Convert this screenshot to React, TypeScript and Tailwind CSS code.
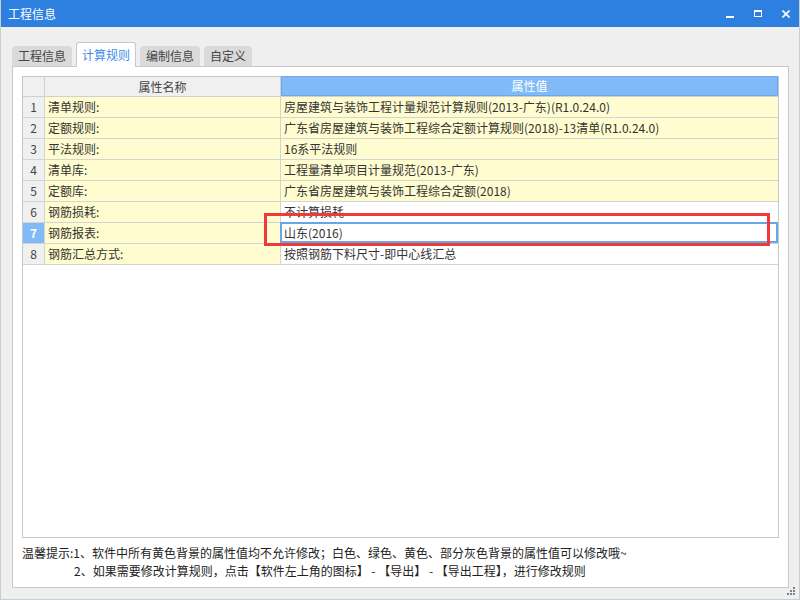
import React from "react";

const rows: { name: string; value: string; locked: boolean }[] = [
  { name: "清单规则:", value: "房屋建筑与装饰工程计量规范计算规则(2013-广东)(R1.0.24.0)", locked: true },
  { name: "定额规则:", value: "广东省房屋建筑与装饰工程综合定额计算规则(2018)-13清单(R1.0.24.0)", locked: true },
  { name: "平法规则:", value: "16系平法规则", locked: true },
  { name: "清单库:", value: "工程量清单项目计量规范(2013-广东)", locked: true },
  { name: "定额库:", value: "广东省房屋建筑与装饰工程综合定额(2018)", locked: true },
  { name: "钢筋损耗:", value: "不计算损耗", locked: false },
  { name: "钢筋报表:", value: "山东(2016)", locked: false },
  { name: "钢筋汇总方式:", value: "按照钢筋下料尺寸-即中心线汇总", locked: false },
];

const tabs = ["工程信息", "计算规则", "编制信息", "自定义"];

export default function App() {
  const selected = 6;

  return (
    <div
      className="relative w-[800px] h-[600px] bg-[#efefef] overflow-hidden border-x border-b border-[#c9ced6] text-[12px] text-[#222]"
      style={{ fontFamily: '"Noto Sans CJK SC", "Noto Sans", sans-serif' }}
    >
      {/* Title bar */}
      <div className="h-[27px] bg-[#2d80e0] flex items-center pl-[8px] text-white text-[12px] -mx-px">
        <span>工程信息</span>
        <div className="ml-auto flex items-center h-full">
          <div className="w-[8px] h-[2px] bg-white mt-[6px] mr-[20px]" />
          <div className="w-[8px] h-[7px] border border-white border-t-2 mr-[20px]" />
          <svg width="8" height="8" viewBox="0 0 8 8" className="mr-[10px]">
            <path d="M0.5 0.5L7.5 7.5M7.5 0.5L0.5 7.5" stroke="white" strokeWidth="1.6" />
          </svg>
        </div>
      </div>

      {/* Tabs */}
      <div className="mt-[15px] ml-[11px] h-[24px] flex items-end gap-[4px]">
        {tabs.map((t, i) =>
          i === 1 ? (
            <div
              key={t}
              className="relative z-10 -mb-px h-[25px] px-[5px] flex items-center bg-white border border-b-0 border-[#c8c8c8] rounded-t-[3px] text-[#3a8ce6]"
            >
              {t}
            </div>
          ) : (
            <div
              key={t}
              className="h-[20px] px-[5px] flex items-center bg-[#dadada] border border-[#dadada] rounded-t-[3px] text-[#444]"
            >
              {t}
            </div>
          )
        )}
      </div>

      {/* Panel */}
      <div className="ml-[11px] w-[777px] h-[522px] bg-white border border-[#c8c8c8] px-[9px] pt-[9px] flex flex-col">
        <div className="h-[462px] border border-[#c8c8c8] flex flex-col">
          {/* header */}
          <div className="h-[20px] flex border-b border-[#d0d0d0] shrink-0">
            <div className="w-[22px] border-r border-[#d0d0d0] bg-[#f0f0f0]" />
            <div className="w-[236px] border-r border-[#d0d0d0] bg-[#f0f0f0] flex items-center justify-center text-[#444]">
              属性名称
            </div>
            <div className="flex-1 bg-[#80bbf8] border border-[#6aa9ef] flex items-center justify-center text-white -mt-px">
              属性值
            </div>
          </div>
          {rows.map((r, i) => (
            <div key={r.name} className="h-[21px] flex border-b border-[#d4d4d4] shrink-0">
              <div
                className={`w-[22px] border-r border-[#d4d4d4] flex items-center justify-center ${
                  i === selected ? "bg-[#80bbf8] text-white font-bold" : "bg-[#f0f0f0] text-[#444]"
                }`}
              >
                {i + 1}
              </div>
              <div className="w-[236px] border-r border-[#d4d4d4] bg-[#fffdd0] flex items-center pl-[3px] text-[#333]">
                {r.name}
              </div>
              <div
                className={`relative flex-1 flex items-center pl-[3px] text-[#333] whitespace-nowrap ${
                  r.locked ? "bg-[#fffdd0]" : "bg-white"
                }`}
              >
                {r.value}
                {i === selected && (
                  <div className="absolute -top-px -left-px right-0 bottom-0 border-2 border-[#66a6ea]" />
                )}
              </div>
            </div>
          ))}
          <div className="flex-1" />
        </div>

        {/* Tips */}
        <div className="mt-[6px] leading-[18px] text-[#222] whitespace-nowrap">
          <div>温馨提示:1、软件中所有黄色背景的属性值均不允许修改；白色、绿色、黄色、部分灰色背景的属性值可以修改哦~</div>
          <div className="pl-[52px]">2、如果需要修改计算规则，点击【软件左上角的图标】 - 【导出】 - 【导出工程】，进行修改规则</div>
        </div>
      </div>

      {/* Resize grip */}
      <svg width="9" height="9" viewBox="0 0 9 9" className="absolute right-[3px] bottom-[3px]">
        <rect x="6" y="0" width="2" height="2" fill="#7d848c" />
        <rect x="3" y="3" width="2" height="2" fill="#7d848c" />
        <rect x="6" y="3" width="2" height="2" fill="#7d848c" />
        <rect x="0" y="6" width="2" height="2" fill="#7d848c" />
        <rect x="3" y="6" width="2" height="2" fill="#7d848c" />
        <rect x="6" y="6" width="2" height="2" fill="#7d848c" />
      </svg>

      {/* Red annotation box */}
      <div className="absolute left-[263px] top-[213px] w-[506px] h-[33px] border-[3px] border-[#f03a3a]" />
    </div>
  );
}
